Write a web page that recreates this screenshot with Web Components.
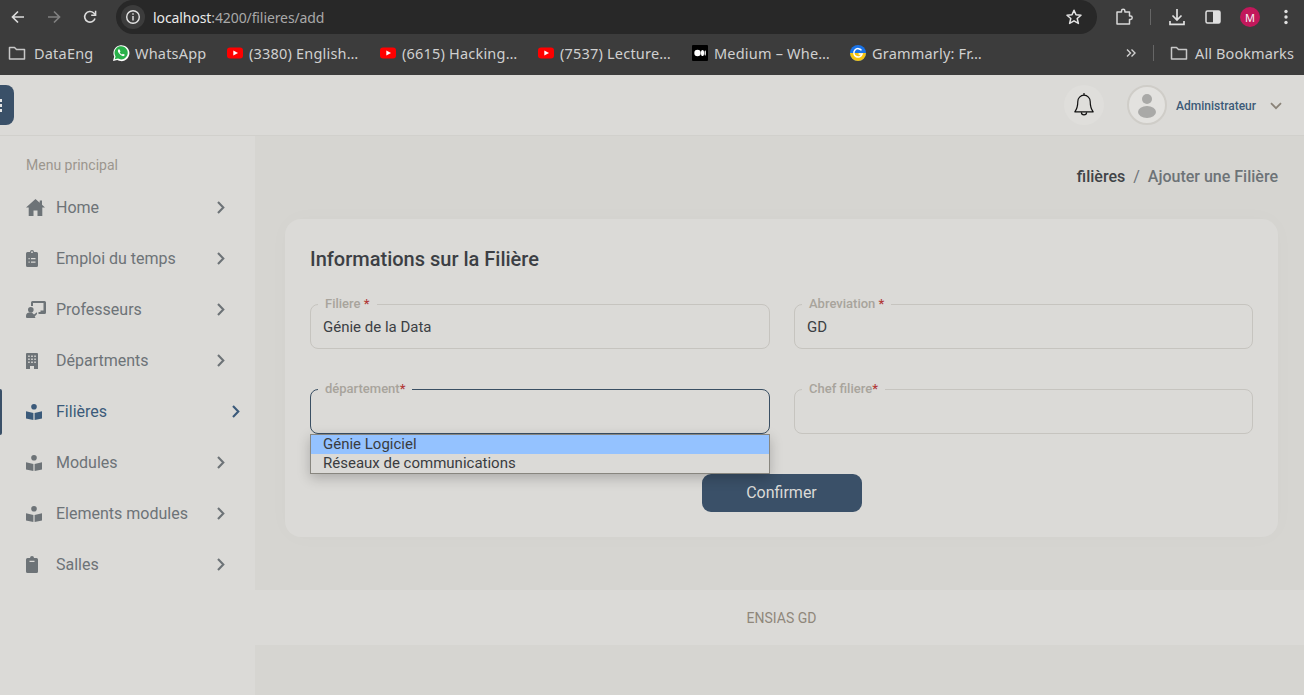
<!DOCTYPE html>
<html lang="fr">
<head>
<meta charset="utf-8">
<title>Filières</title>
<style>
    html, body { margin: 0; height: 100%; overflow: hidden; background: #d6d5d1; }
    body { display: flex; flex-direction: column; font-family: Roboto, sans-serif; }
    .row { display: flex; flex: 1; min-height: 0; }
</style>
</head>
<body>
<browser-bar url-host="localhost" url-rest=":4200/filieres/add"></browser-bar>
<bookmark-bar>
    <book-mark style="width:104px;gap:8px"><svg slot="icon" width="18" height="18" viewBox="0 0 18 18" fill="none" stroke="#c8c8c8" stroke-width="1.5"><path d="M1.500 3.500h5l2 2h8v9.500h-15z" stroke-linejoin="round"/></svg>DataEng</book-mark>
    <book-mark style="width:115px;gap:5px"><svg slot="icon" width="18" height="18" viewBox="0 0 18 18"><path d="M1 17l1.200-4.400A8 8 0 1 1 5.300 16z" fill="#fff"/><path d="M2.800 15.200l.8-2.800A6.600 6.600 0 1 1 6 14.600z" fill="#29b14a"/><path d="M6.600 5.200c-.9.7-1 2 0 3.600 1 1.600 2.400 2.800 4 3.300 1 .2 2-.4 2.200-1.400l-1.900-1-.8.9c-1-.4-1.900-1.300-2.400-2.400l.8-.8-.9-2z" fill="#fff"/></svg>WhatsApp</book-mark>
    <book-mark style="width:153px"><yt-icon slot="icon"></yt-icon>(3380) English…</book-mark>
    <book-mark style="width:158px"><yt-icon slot="icon"></yt-icon>(6615) Hacking…</book-mark>
    <book-mark style="width:154px"><yt-icon slot="icon"></yt-icon>(7537) Lecture…</book-mark>
    <book-mark style="width:158px"><svg slot="icon" width="16" height="16" viewBox="0 0 16 16"><rect width="16" height="16" rx="1" fill="#000"/><ellipse cx="5.500" cy="8" rx="3.200" ry="3.300" fill="#fff"/><ellipse cx="10.500" cy="8" rx="1.600" ry="3.100" fill="#fff"/><ellipse cx="13.200" cy="8" rx=".7" ry="2.700" fill="#fff"/></svg>Medium – Whe…</book-mark>
    <book-mark><svg slot="icon" width="16" height="16" viewBox="0 0 16 16"><circle cx="8" cy="8" r="8" fill="#1a73e8"/><path d="M0 8h16a8 8 0 0 1-16 0z" fill="#f6c30f"/><path d="M11.500 5.400A4.200 4.200 0 1 0 12.100 9H8.600" fill="none" stroke="#fff" stroke-width="1.500"/></svg>Grammarly: Fr…</book-mark>
    <span slot="end">
        <svg width="12" height="12" viewBox="0 0 12 12" fill="none" stroke="#d0d0d0" stroke-width="1.400"><path d="M2 2.500l3.500 3.500L2 9.500M6.500 2.500L10 6l-3.500 3.500"/></svg>
    </span>
</bookmark-bar>
<app-header></app-header>
<div class="row">
    <side-menu label="Menu principal">
        <menu-item><svg slot="icon" width="19" height="17" viewBox="0 0 19 17" fill="currentColor"><path d="M9.500 0L0 8.500h2.700V17h4.800v-5.500h4V17h4.800V8.500H19L16 5.800V1.500h-2.300v2.200z"/></svg>Home</menu-item>
        <menu-item><svg slot="icon" width="12" height="17" viewBox="0 0 12 17" fill="currentColor" fill-rule="evenodd"><path d="M1.500 2H4a2 2 0 0 1 4 0h2.500A1.500 1.500 0 0 1 12 3.500v12a1.500 1.500 0 0 1-1.500 1.500h-9A1.500 1.500 0 0 1 0 15.500v-12A1.500 1.500 0 0 1 1.500 2zM6 1.300a.9.9 0 1 0 0 1.800.9.9 0 0 0 0-1.800zM2.500 8v1.200h1.200V8zM5 8v1.200h4.500V8zM2.500 11.500v1.200h1.200v-1.200zM5 11.500v1.200h4.500v-1.200z"/></svg>Emploi du temps</menu-item>
        <menu-item><svg slot="icon" width="20" height="17" viewBox="0 0 20 17" fill="currentColor"><path d="M5 1.500A1.500 1.500 0 0 1 6.500 0h12A1.500 1.500 0 0 1 20 1.500v10a1.500 1.500 0 0 1-1.500 1.500h-6v-2h2V9.500h3V2H7v3H5z"/><circle cx="4.800" cy="8.800" r="2.800"/><path d="M0 15a3.500 3.500 0 0 1 3.500-3.500h2.300L8 13.500l3-2.200v1.800L8.700 15.500 9.500 17H1a1 1 0 0 1-1-1z"/></svg>Professeurs</menu-item>
        <menu-item><svg slot="icon" width="12" height="16" viewBox="0 0 12 16" fill="currentColor" fill-rule="evenodd"><path d="M1 0h10a1 1 0 0 1 1 1v15H8v-3H4v3H0V1a1 1 0 0 1 1-1zM2.200 2.500v1.500h1.500V2.500zM5.200 2.500v1.500h1.600V2.500zM8.300 2.500v1.500h1.500V2.500zM2.200 5.500v1.500h1.500V5.500zM5.200 5.500v1.500h1.600V5.500zM8.300 5.500v1.500h1.500V5.500zM2.200 8.500v1.500h1.500V8.500zM5.200 8.500v1.500h1.600V8.500zM8.300 8.500v1.500h1.500V8.500z"/></svg>Départments</menu-item>
        <menu-item active><svg slot="icon" width="16" height="16" viewBox="0 0 16 16"><circle cx="8" cy="2.800" r="2.800" fill="currentColor"/><path d="M0 7.200l7.400 1.700V16L0 14.400z" fill="currentColor"/><path d="M16 7.200L8.600 8.900V16l7.400-1.600z" fill="currentColor"/></svg>Filières</menu-item>
        <menu-item><svg slot="icon" width="16" height="16" viewBox="0 0 16 16" fill="currentColor"><circle cx="8" cy="2.800" r="2.800"/><path d="M0 7.200l7.400 1.700V16L0 14.400z"/><path d="M16 7.200L8.600 8.900V16l7.400-1.600z"/></svg>Modules</menu-item>
        <menu-item><svg slot="icon" width="16" height="16" viewBox="0 0 16 16" fill="currentColor"><circle cx="8" cy="2.800" r="2.800"/><path d="M0 7.200l7.400 1.700V16L0 14.400z"/><path d="M16 7.200L8.600 8.900V16l7.400-1.600z"/></svg>Elements modules</menu-item>
        <menu-item><svg slot="icon" width="12" height="17" viewBox="0 0 12 17" fill="currentColor" fill-rule="evenodd"><path d="M1.500 2H4a2 2 0 0 1 4 0h2.500A1.500 1.500 0 0 1 12 3.500v12a1.500 1.500 0 0 1-1.500 1.500h-9A1.500 1.500 0 0 1 0 15.500v-12A1.500 1.500 0 0 1 1.500 2zM3.500 4.800v1.200h5V4.800z"/></svg>Salles</menu-item>
    </side-menu>
    <page-main>
        <bread-crumb current="filières" page="Ajouter une Filière"></bread-crumb>
        <form-card heading="Informations sur la Filière">
            <form-field label="Filiere" space value="Génie de la Data"></form-field>
            <form-field label="Abreviation" space value="GD"></form-field>
            <form-field label="département" focused>
                <drop-list>
                    <span selected>Génie Logiciel</span>
                    <span>Réseaux de communications</span>
                </drop-list>
            </form-field>
            <form-field label="Chef filiere"></form-field>
            <span slot="action">Confirmer</span>
        </form-card>
    </page-main>
</div>

<script>
class BrowserBar extends HTMLElement {
    constructor() {
        super();
        this.attachShadow({mode: "open"});
    }
    connectedCallback() {
        this.shadowRoot.innerHTML = `
        <style>
            :host { display: flex; align-items: flex-start; height: 37px; background: #3c3c3c; flex: none; }
            svg { display: block; flex: none; }
            .nav { display: flex; align-items: center; height: 34px; padding-left: 10px; gap: 20px; width: 116px; box-sizing: border-box; }
            .omni { flex: none; width: 981px; height: 34px; background: #282828; border-radius: 17px; display: flex; align-items: center; box-sizing: border-box; padding-left: 5px; }
            .info { width: 24px; height: 24px; background: #3c3c3c; border-radius: 50%; display: flex; align-items: center; justify-content: center; margin-right: 8px; }
            .url { font: 14px "Noto Sans", sans-serif; color: #a9a9a9; letter-spacing: -.1px; }
            .url b { font-weight: 400; color: #eaeaea; }
            .star { margin-left: auto; margin-right: 14px; }
            .tools { display: flex; align-items: center; height: 34px; }
            .sep { width: 1px; height: 16px; background: #666; }
            .avatar { width: 20px; height: 20px; border-radius: 50%; background: #c2185b; color: #f4f4f4; font: 11px "Noto Sans", sans-serif; display: flex; align-items: center; justify-content: center; }
        </style>
        <div class="nav">
            <svg width="16" height="16" viewBox="0 0 16 16" fill="none" stroke="#dcdcdc" stroke-width="1.700"><path d="M14 8H2.500M8 2.500L2.500 8 8 13.500"/></svg>
            <svg width="16" height="16" viewBox="0 0 16 16" fill="none" stroke="#808080" stroke-width="1.700"><path d="M2 8h11.500M8 2.500L13.500 8 8 13.500"/></svg>
            <svg width="16" height="16" viewBox="0 0 16 16" fill="none" stroke="#dcdcdc" stroke-width="1.600"><path d="M13 9.500A5.300 5.300 0 1 1 11.700 4L13.500 5.800"/><path d="M13.600 1.800v4.400H9.200" stroke-width="1.500"/></svg>
        </div>
        <div class="omni">
            <span class="info"><svg width="16" height="16" viewBox="0 0 16 16" fill="none" stroke="#e4e4e4" stroke-width="1.400"><circle cx="8" cy="8" r="6.300"/><path d="M8 7v4.500M8 4.300v1.500"/></svg></span>
            <span class="url"><b>${this.getAttribute("url-host")}</b>${this.getAttribute("url-rest")}</span>
            <svg class="star" width="18" height="18" viewBox="0 0 18 18" fill="none" stroke="#e4e4e4" stroke-width="1.500"><path d="M9 2.200l2 4.600 5 .4-3.800 3.300 1.200 4.900L9 12.800l-4.400 2.600 1.200-4.900L2 7.200l5-.4z" stroke-linejoin="round"/></svg>
        </div>
        <div class="tools">
            <svg style="margin-left:18px" width="18" height="18" viewBox="0 0 18 18" fill="none" stroke="#d8d8d8" stroke-width="1.500"><path d="M2 4h4.500V3a1.700 1.700 0 0 1 3.400 0v1h4.600v4h1a1.700 1.700 0 0 1 0 3.400h-1V16H2z" stroke-linejoin="round"/></svg>
            <span class="sep" style="margin-left:17px"></span>
            <svg style="margin-left:17px" width="18" height="18" viewBox="0 0 18 18" fill="none" stroke="#e0e0e0" stroke-width="1.700"><path d="M9 1v10.500M4.500 7.500L9 12l4.500-4.500M2 13v3.300h14V13"/></svg>
            <svg style="margin-left:18px" width="18" height="18" viewBox="0 0 18 18"><rect x="2" y="3" width="14" height="12" rx="1.500" fill="none" stroke="#e0e0e0" stroke-width="1.500"/><rect x="9" y="3" width="7" height="12" fill="#e0e0e0"/></svg>
            <span class="avatar" style="margin-left:18px">M</span>
            <svg style="margin-left:24px" width="4" height="16" viewBox="0 0 4 16" fill="#e0e0e0"><circle cx="2" cy="2.500" r="1.700"/><circle cx="2" cy="8" r="1.700"/><circle cx="2" cy="13.500" r="1.700"/></svg>
        </div>`;
    }
}

class BookmarkBar extends HTMLElement {
    constructor() {
        super();
        this.attachShadow({mode: "open"});
    }
    connectedCallback() {
        this.shadowRoot.innerHTML = `
        <style>
            :host { display: flex; align-items: center; height: 38px; padding-left: 8px; padding-bottom: 6px; box-sizing: border-box; background: #3c3c3c; flex: none; }
            .end { margin-left: auto; display: flex; align-items: center; padding-right: 10px; font: 14.5px "Noto Sans", sans-serif; letter-spacing: .1px; color: #d0d0d0; white-space: nowrap; }
            .sep { width: 1px; height: 16px; background: #666; margin: 0 16px; }
            svg { display: block; }
        </style>
        <slot></slot>
        <div class="end">
            <slot name="end"></slot>
            <span class="sep"></span>
            <svg width="18" height="18" viewBox="0 0 18 18" fill="none" stroke="#c8c8c8" stroke-width="1.500" style="margin-right:7px"><path d="M1.500 3.500h5l2 2h8v9.500h-15z" stroke-linejoin="round"/></svg>
            All Bookmarks
        </div>`;
    }
}

class BookMark extends HTMLElement {
    constructor() {
        super();
        this.attachShadow({mode: "open"});
    }
    connectedCallback() {
        this.shadowRoot.innerHTML = `
        <style>
            :host { display: flex; align-items: center; flex: none; gap: 6px; font: 14.5px "Noto Sans", sans-serif; letter-spacing: .2px; color: #d0d0d0; white-space: nowrap; }
            slot[name=icon]::slotted(*) { display: block; flex: none; }
        </style>
        <slot name="icon"></slot><slot></slot>`;
    }
}

class YtIcon extends HTMLElement {
    constructor() {
        super();
        this.attachShadow({mode: "open"});
    }
    connectedCallback() {
        this.shadowRoot.innerHTML = `
        <style>:host { display: block; width: 16px; height: 16px; } svg { display: block; }</style>
        <svg width="16" height="16" viewBox="0 0 16 16"><rect y="2.500" width="16" height="11" rx="3" fill="#f00"/><path d="M6.300 5.500L11 8l-4.700 2.500z" fill="#fff"/></svg>`;
    }
}

class AppHeader extends HTMLElement {
    constructor() {
        super();
        this.attachShadow({mode: "open"});
    }
    connectedCallback() {
        this.shadowRoot.innerHTML = `
        <style>
            :host { display: flex; align-items: center; height: 61px; box-sizing: border-box; background: #dbdad7; border-bottom: 1px solid #d1d0cc; flex: none; padding-right: 22px; }
            svg { display: block; }
            .toggle { width: 40px; height: 40px; margin-left: -26px; border-radius: 8px; background: #3a5068; display: flex; flex-direction: column; align-items: flex-end; justify-content: center; gap: 2px; padding-right: 12px; box-sizing: border-box; }
            .toggle i { width: 2px; height: 3px; background: #e6e6e6; }
            .bell { margin-left: auto; width: 40px; height: 40px; border-radius: 50%; background: #dfdedb; display: flex; align-items: center; justify-content: center; }
            .avatar { width: 40px; height: 40px; margin-left: 23px; box-sizing: border-box; border: 2px solid #cfcdc8; border-radius: 50%; background: #e3e2df; display: flex; align-items: center; justify-content: center; }
            .name { font: 500 12px Roboto, sans-serif; color: #3d5a78; margin-left: 9px; padding-top: 1px; }
            .caret { margin-left: 14px; padding-top: 1px; }
        </style>
        <div class="toggle"><i></i><i></i><i></i></div>
        <div class="bell">
            <svg width="22" height="26" viewBox="0 0 22 26" fill="none" stroke="#111" stroke-width="1.200"><path d="M11 3.200a6.200 6.200 0 0 0-6.200 6.300c0 5-.8 7.500-3 10.300h18.400c-2.200-2.800-3-5.300-3-10.300A6.200 6.200 0 0 0 11 3.200z" stroke-linejoin="round"/><path d="M11 1v2.200M8.400 20.200a2.600 2.600 0 0 0 5.200 0"/></svg>
        </div>
        <div class="avatar">
            <svg width="24" height="26" viewBox="0 0 24 26" fill="#a9a9a7"><circle cx="12" cy="7" r="5"/><ellipse cx="12" cy="20" rx="9" ry="6"/></svg>
        </div>
        <span class="name">Administrateur</span>
        <svg class="caret" width="12" height="8" viewBox="0 0 12 8" fill="none" stroke="#8a8378" stroke-width="1.800"><path d="M1 1.200L6 6.200l5-5"/></svg>`;
    }
}

class SideMenu extends HTMLElement {
    constructor() {
        super();
        this.attachShadow({mode: "open"});
    }
    connectedCallback() {
        this.shadowRoot.innerHTML = `
        <style>
            :host { display: flex; flex-direction: column; width: 255px; flex: none; background: #dbdad7; box-sizing: border-box; padding-top: 21px; }
            .label { font: 14px/16px Roboto, sans-serif; color: #9b968e; padding-left: 26px; margin-bottom: 9px; }
        </style>
        <div class="label">${this.getAttribute("label")}</div>
        <slot></slot>`;
    }
}

class MenuItem extends HTMLElement {
    constructor() {
        super();
        this.attachShadow({mode: "open"});
    }
    connectedCallback() {
        const on = this.hasAttribute("active");
        this.shadowRoot.innerHTML = `
        <style>
            :host { display: flex; align-items: center; height: 51px; padding-left: 26px; font: 16px Roboto, sans-serif; color: ${on ? "#3b5a7a" : "#6d7377"}; position: relative; }
            .icon { width: 30px; flex: none; display: flex; align-items: center; }
            .arrow { margin-left: auto; margin-right: ${on ? "15px" : "30px"}; display: block; }
            .bar { position: absolute; left: 0; top: 3px; width: 2px; height: 46px; background: #3a5068; border-radius: 0 2px 2px 0; display: ${on ? "block" : "none"}; }
            ::slotted(svg) { display: block; }
        </style>
        <span class="bar"></span>
        <span class="icon"><slot name="icon"></slot></span>
        <slot></slot>
        <svg class="arrow" width="8" height="13" viewBox="0 0 8 13" fill="none" stroke="currentColor" stroke-width="2.100"><path d="M1 1l5.300 5.500L1 12"/></svg>`;
    }
}

class PageMain extends HTMLElement {
    constructor() {
        super();
        this.attachShadow({mode: "open"});
    }
    connectedCallback() {
        this.shadowRoot.innerHTML = `
        <style>
            :host { display: flex; flex-direction: column; flex: 1; min-width: 0; background: #d6d5d1; }
            .footer { height: 55px; margin-top: 53px; background: #dbdad7; display: flex; align-items: center; justify-content: center; padding-left: 4px; font: 14px Roboto, sans-serif; color: #8f877b; }
        </style>
        <slot></slot>
        <div class="footer">ENSIAS GD</div>`;
    }
}

class BreadCrumb extends HTMLElement {
    constructor() {
        super();
        this.attachShadow({mode: "open"});
    }
    connectedCallback() {
        this.shadowRoot.innerHTML = `
        <style>
            :host { display: flex; justify-content: flex-end; gap: 8px; padding: 31px 26px 0 0; height: 53px; box-sizing: border-box; font: 500 16px/20px Roboto, sans-serif; color: #6d7377; margin-bottom: 30px; }
            b { font-weight: 500; color: #3f4347; }
            span:first-of-type { font-weight: 400; }
        </style>
        <b>${this.getAttribute("current")}</b><span>/</span><span>${this.getAttribute("page")}</span>`;
    }
}

class FormCard extends HTMLElement {
    constructor() {
        super();
        this.attachShadow({mode: "open"});
    }
    connectedCallback() {
        this.shadowRoot.innerHTML = `
        <style>
            :host { display: block; margin: 0 26px 0 30px; height: 318px; box-sizing: border-box; padding: 25px 25px 0; background: #dbdad7; border-radius: 16px; box-shadow: 0 0 24px rgba(0,0,0,.02); }
            h2 { margin: 0 0 30px; font: 500 20px/30px Roboto, sans-serif; color: #3c3f44; }
            .grid { display: grid; grid-template-columns: 460px 459px; column-gap: 24px; row-gap: 40px; }
            .action { display: flex; justify-content: center; margin-top: 40px; }
            .btn { width: 160px; height: 38px; padding-bottom: 1px; box-sizing: border-box; border-radius: 9px; background: #3a5068; color: #dbdad7; font: 16px Roboto, sans-serif; display: flex; align-items: center; justify-content: center; }
        </style>
        <h2>${this.getAttribute("heading")}</h2>
        <div class="grid"><slot></slot></div>
        <div class="action"><div class="btn"><slot name="action"></slot></div></div>`;
    }
}

class FormField extends HTMLElement {
    constructor() {
        super();
        this.attachShadow({mode: "open"});
    }
    connectedCallback() {
        const star = this.hasAttribute("space") ? " *" : "*";
        this.shadowRoot.innerHTML = `
        <style>
            :host { display: block; position: relative; height: 45px; box-sizing: border-box; border: 1px solid ${this.hasAttribute("focused") ? "#3a4f63" : "#c6c4bf"}; border-radius: 8px; }
            .label { position: absolute; left: 7px; top: -9px; padding: 0 7px; background: #dbdad7; font: 500 13px/16px Roboto, sans-serif; color: #a8a49c; white-space: pre; }
            .label i { font-style: normal; color: #b23a3a; }
            .value { display: block; padding-left: 12px; font: 15px/45px Roboto, sans-serif; height: 43px; color: #3c3f44; }
        </style>
        <span class="label">${this.getAttribute("label")}<i>${star}</i></span>
        <span class="value">${this.getAttribute("value") || ""}</span>
        <slot></slot>`;
    }
}

class DropList extends HTMLElement {
    constructor() {
        super();
        this.attachShadow({mode: "open"});
    }
    connectedCallback() {
        this.shadowRoot.innerHTML = `
        <style>
            :host { display: flex; flex-direction: column; position: absolute; left: -1px; right: -1px; top: 44px; height: 40px; box-sizing: border-box; border: 1px solid #88867f; background: #dbdad7; box-shadow: 0 4px 12px rgba(0,0,0,.22); z-index: 2; }
            ::slotted(span) { display: block; height: 19px; padding-left: 12px; font: 15px/19px Roboto, sans-serif; color: #3a3c40; }
            ::slotted(span[selected]) { background: #94c2ff; }
        </style>
        <slot></slot>`;
    }
}

customElements.define("browser-bar", BrowserBar);
customElements.define("bookmark-bar", BookmarkBar);
customElements.define("book-mark", BookMark);
customElements.define("yt-icon", YtIcon);
customElements.define("app-header", AppHeader);
customElements.define("side-menu", SideMenu);
customElements.define("menu-item", MenuItem);
customElements.define("page-main", PageMain);
customElements.define("bread-crumb", BreadCrumb);
customElements.define("form-card", FormCard);
customElements.define("form-field", FormField);
customElements.define("drop-list", DropList);
</script>
</body>
</html>
